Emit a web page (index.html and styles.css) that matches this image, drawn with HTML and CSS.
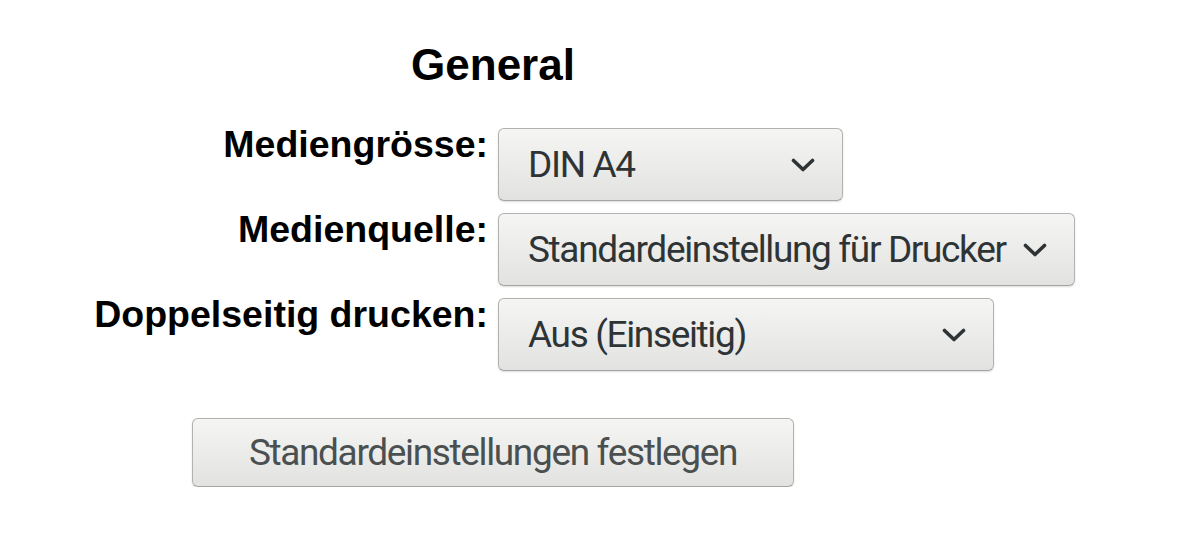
FILE: index.html
```html
<!DOCTYPE html>
<html lang="de">

<head>
    <meta charset="UTF-8" />
    <meta name="viewport" content="width=device-width, initial-scale=1" />
    <title>Druckerstandards - General</title>
    <link rel="stylesheet" href="styles.css">
</head>

<body>

    <!-- General options -->
    <div class="panel">
        <h2 class="title">General</h2>

        <div class="rows">
            <div class="label">Mediengrösse:</div>
            <div class="select select-size">
                <span>DIN A4</span>
                <svg class="chevron" width="24" height="14" viewBox="0 0 24 14">
                    <polyline points="2.5,2.5 12,11.5 21.5,2.5" />
                </svg>
            </div>

            <div class="label">Medienquelle:</div>
            <div class="select select-source">
                <span>Standardeinstellung für Drucker</span>
                <svg class="chevron" width="24" height="14" viewBox="0 0 24 14">
                    <polyline points="2.5,2.5 12,11.5 21.5,2.5" />
                </svg>
            </div>

            <div class="label">Doppelseitig drucken:</div>
            <div class="select select-duplex">
                <span>Aus (Einseitig)</span>
                <svg class="chevron" width="24" height="14" viewBox="0 0 24 14">
                    <polyline points="2.5,2.5 12,11.5 21.5,2.5" />
                </svg>
            </div>
        </div>

        <div class="actions">
            <button class="btn">Standardeinstellungen festlegen</button>
        </div>
    </div>

</body>

</html>
```

FILE: styles.css
```css
body {
    font-family: 'Liberation Sans', Arial, sans-serif;
    background-color: #fff;
    color: #000;
    margin: 0;
}

.panel {
    width: 986px;
    padding-top: 40px;
}

.title {
    margin: 0;
    font-size: 44px;
    line-height: 50px;
    font-weight: bold;
    text-align: center;
}

.rows {
    display: grid;
    grid-template-columns: 488px auto;
    column-gap: 10px;
    row-gap: 12px;
    margin-top: 38px;
    justify-items: start;
}

.label {
    justify-self: end;
    margin-top: -3px;
    font-size: 37.5px;
    line-height: 38px;
    font-weight: bold;
    text-align: right;
    white-space: nowrap;
}

.select {
    box-sizing: border-box;
    height: 73px;
    display: flex;
    align-items: center;
    justify-content: space-between;
    padding: 0 27px 0 29px;
    border: 1px solid #b2b2b0;
    border-bottom-color: #a4a4a2;
    border-radius: 6px;
    background: linear-gradient(#f5f5f4, #e2e2e0);
    box-shadow: 0 1px 2px rgba(0, 0, 0, 0.14);
    font-family: Roboto, 'Liberation Sans', sans-serif;
    font-size: 37px;
    letter-spacing: -1.35px;
    line-height: 71px;
    color: #2e3436;
    white-space: nowrap;
}

.select-size {
    width: 345px;
}

.select-source {
    width: 577px;
}

.select-duplex {
    width: 496px;
}

.chevron {
    flex: none;
    fill: none;
    stroke: #2e3436;
    stroke-width: 3.6;
    stroke-linecap: round;
    stroke-linejoin: round;
}

.actions {
    display: flex;
    justify-content: center;
    margin-top: 47px;
}

.btn {
    box-sizing: border-box;
    width: 602px;
    height: 69px;
    padding: 0;
    border: 1px solid #b2b2b0;
    border-bottom-color: #a4a4a2;
    border-radius: 6px;
    background: linear-gradient(#f5f5f4, #e2e2e0);
    box-shadow: 0 1px 2px rgba(0, 0, 0, 0.14);
    font-family: Roboto, 'Liberation Sans', sans-serif;
    font-size: 37px;
    letter-spacing: -1.35px;
    line-height: 67px;
    color: #4a4f50;
}

.btn:hover {
    cursor: pointer;
}
```
